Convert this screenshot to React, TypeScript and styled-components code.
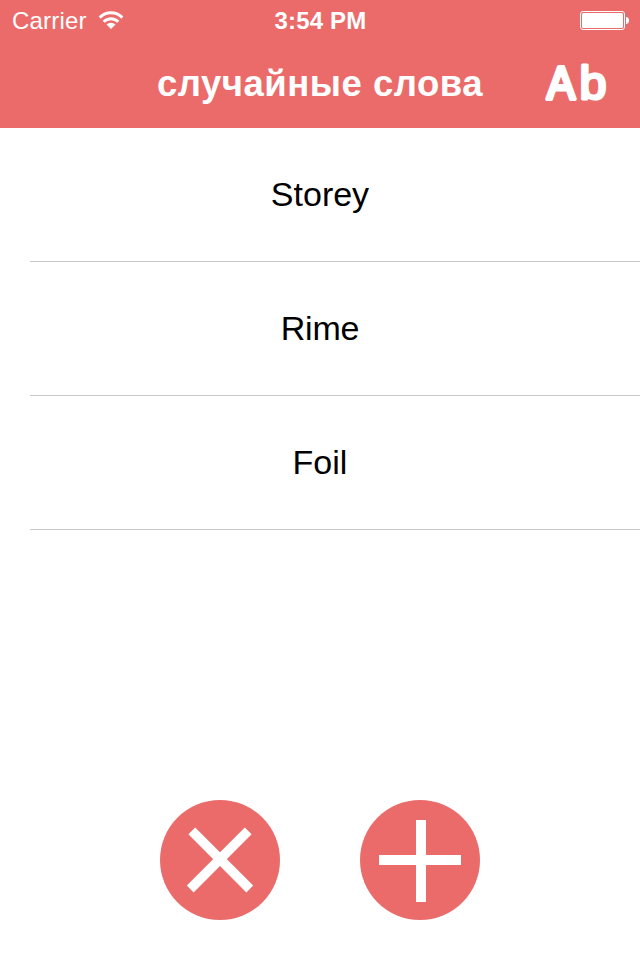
import React from "react";
import styled, { createGlobalStyle } from "styled-components";

const coral = "#eb6b6a";

const GlobalStyle = createGlobalStyle`
  * { box-sizing: border-box; }
  body { margin: 0; background: #fff; }
`;

const Screen = styled.div`
  width: 640px;
  height: 960px;
  display: flex;
  flex-direction: column;
  background: #fff;
  font-family: "Liberation Sans", Arial, sans-serif;
  color: #000;
`;

const Header = styled.header`
  height: 128px;
  background: ${coral};
  color: #fff;
`;

const StatusBar = styled.div`
  height: 42px;
  display: grid;
  grid-template-columns: 1fr auto 1fr;
  align-items: center;
  padding: 0 11px 0 12px;
  line-height: 40px;
`;

const Carrier = styled.div`
  display: flex;
  align-items: center;
  gap: 11px;
  height: 40px;
  font-size: 24px;
  letter-spacing: 0.2px;
  svg { margin-left: -0.2px; }
`;

const Clock = styled.div`
  font-size: 24px;
  font-weight: 700;
  letter-spacing: 0.15px;
`;

const BatterySlot = styled.div`
  display: flex;
  justify-content: flex-end;
`;

const NavBar = styled.div`
  height: 86px;
  display: grid;
  grid-template-columns: 1fr auto 1fr;
  align-items: center;
`;

const Title = styled.h1`
  grid-column: 2;
  margin: 0;
  font-size: 36.5px;
  font-weight: 700;
  letter-spacing: 0.5px;
  line-height: 84px;
  height: 86px;
  white-space: nowrap;
`;

const NavAction = styled.button`
  justify-self: end;
  width: 70px;
  height: 56px;
  margin: -2px 29px 0 0;
  padding: 0;
  border: 0;
  background: none;
  svg { display: block; }
`;

const WordList = styled.ul`
  flex: 1;
  margin: 0;
  padding: 0 0 0 30px;
  list-style: none;
`;

const WordRow = styled.li`
  height: 134px;
  padding-right: 30px;
  border-bottom: 1px solid #c8c7cc;
  font-size: 34px;
  line-height: 132px;
  text-align: center;
`;

const Word = styled.span<{ $tracking: number }>`
  letter-spacing: ${(p) => p.$tracking}px;
`;

const Actions = styled.footer`
  display: flex;
  justify-content: center;
  gap: 80px;
  padding-bottom: 40px;
`;

const RoundButton = styled.button`
  width: 120px;
  height: 120px;
  padding: 0;
  border: 0;
  border-radius: 50%;
  background: ${coral};
  svg { display: block; }
`;

const WifiIcon = () => (
  <svg width="26" height="20" viewBox="0 0 26 20" fill="none" stroke="#fff" strokeWidth="3">
    <path d="M1.7 6.6a15.6 15.6 0 0 1 22.6 0" />
    <path d="M5.7 10.8a10.2 10.2 0 0 1 14.6 0" />
    <path d="M13 18l-4.5-4.5a6.4 6.4 0 0 1 9 0z" fill="#fff" stroke="none" />
  </svg>
);

const BatteryIcon = () => (
  <svg width="49" height="20" viewBox="0 0 49 20">
    <rect x="0.5" y="0.5" width="44" height="18" rx="2.5" fill="none" stroke="#fff" />
    <rect x="2" y="2" width="41" height="15" rx="1.5" fill="#fff" />
    <path d="M46 6c2 0 3 1.5 3 3.5S48 13 46 13z" fill="#fff" />
  </svg>
);

const LettersIcon = () => (
  <svg
    width="70" height="56" viewBox="0 0 70 56" fill="#fff" stroke="#fff"
    strokeLinejoin="round" fontFamily="Liberation Sans, Arial, sans-serif"
  >
    <text x="6" y="42.6" fontSize="46" strokeWidth="4" textLength="28" lengthAdjust="spacingAndGlyphs">A</text>
    <text x="38.6" y="42.6" fontSize="45.5" strokeWidth="3" textLength="27" lengthAdjust="spacingAndGlyphs">b</text>
  </svg>
);

const CrossIcon = () => (
  <svg width="120" height="120" stroke="#fff" strokeWidth="9.6">
    <path d="M31.8 30.8L89.8 89M30.2 89L88.2 30.8" />
  </svg>
);

const PlusIcon = () => (
  <svg width="120" height="120" stroke="#fff" strokeWidth="10">
    <path d="M61 20v82M19 60h82" />
  </svg>
);

const words = [
  { text: "Storey", tracking: 0 },
  { text: "Rime", tracking: -0.2 },
  { text: "Foil", tracking: 0 },
];

export default function App() {
  return (
    <Screen>
      <GlobalStyle />
      <Header>
        <StatusBar>
          <Carrier>Carrier<WifiIcon /></Carrier>
          <Clock>3:54 PM</Clock>
          <BatterySlot><BatteryIcon /></BatterySlot>
        </StatusBar>
        <NavBar>
          <Title>случайные слова</Title>
          <NavAction aria-label="Ab"><LettersIcon /></NavAction>
        </NavBar>
      </Header>
      <WordList>
        {words.map((w) => (
          <WordRow key={w.text}><Word $tracking={w.tracking}>{w.text}</Word></WordRow>
        ))}
      </WordList>
      <Actions>
        <RoundButton aria-label="Clear"><CrossIcon /></RoundButton>
        <RoundButton aria-label="Add"><PlusIcon /></RoundButton>
      </Actions>
    </Screen>
  );
}
